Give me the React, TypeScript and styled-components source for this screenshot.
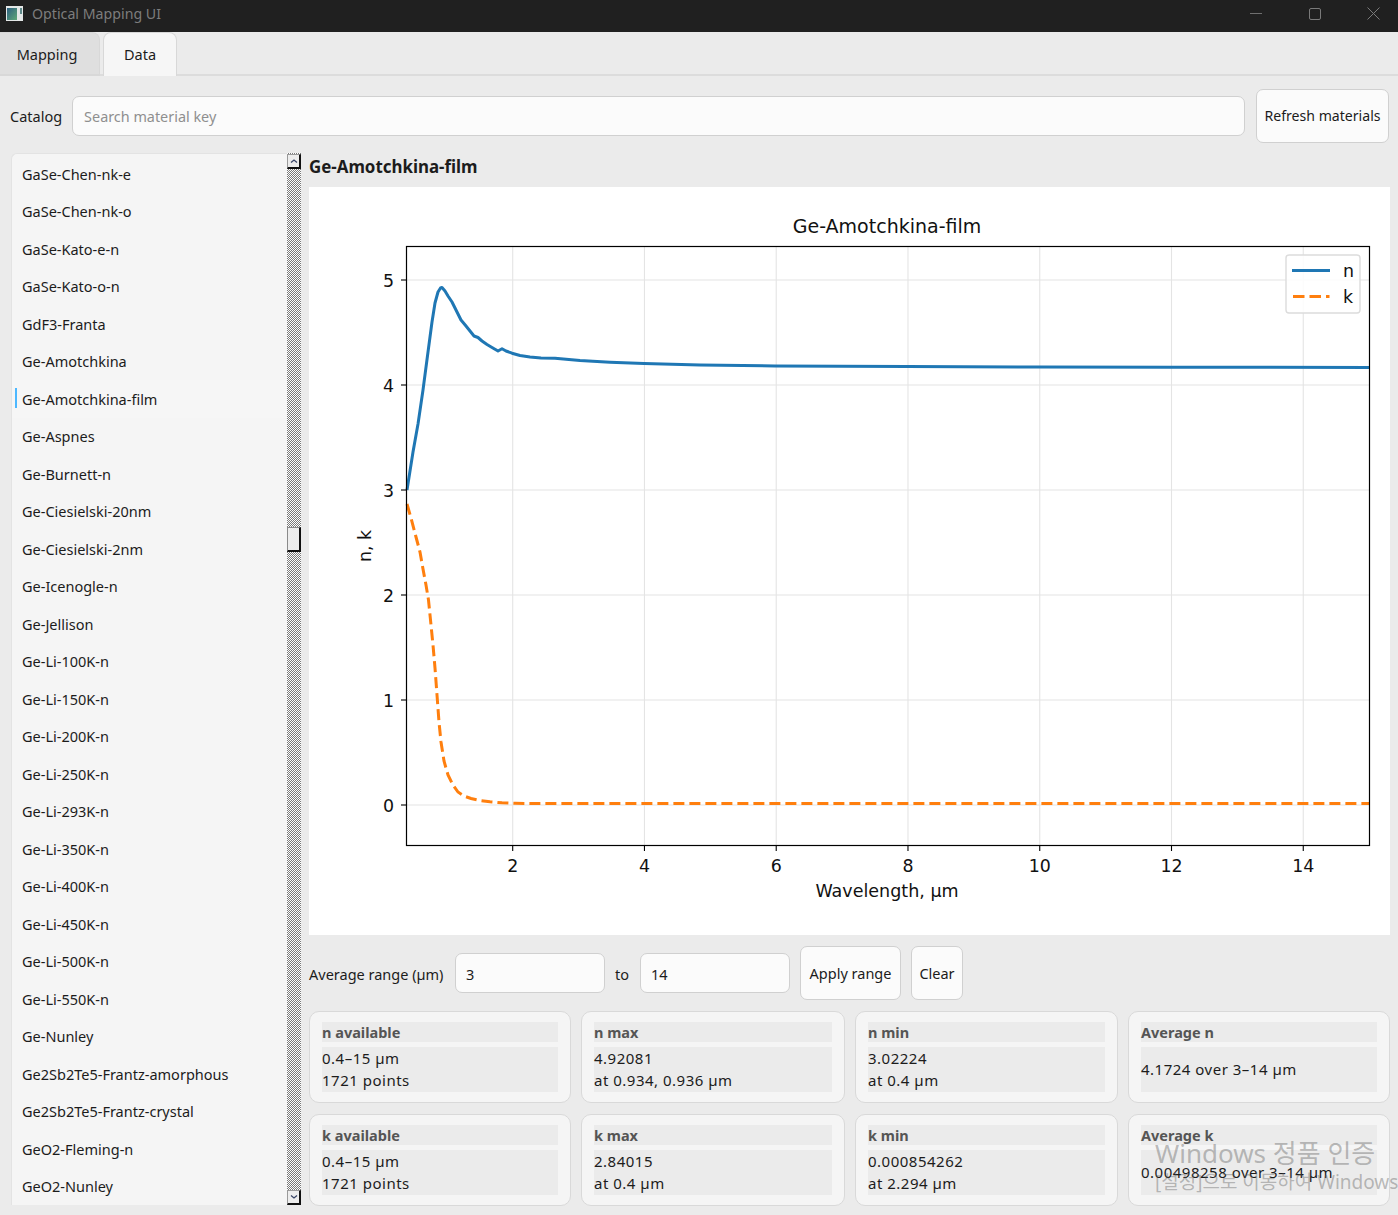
import React from "react";
import styled, { createGlobalStyle } from "styled-components";

const Global = createGlobalStyle`
  html, body { margin: 0; padding: 0; background: #ebebeb; }
  * { box-sizing: border-box; }
`;

const UI_FONT = `"Noto Sans", "Noto Sans CJK KR", sans-serif`;

const Page = styled.div`
  position: relative;
  width: 1398px;
  height: 1215px;
  overflow: hidden;
  background: #ebebeb;
  color: #1c1c1c;
  font-family: ${UI_FONT};
  font-size: 14.5px;
`;

const TitleBar = styled.div`
  height: 32px;
  background: #202020;
  display: flex;
  align-items: center;
  padding: 0 0 5px 6px;
  color: #7d7d7d;
  font-size: 14.2px;
`;
const TitleText = styled.span`
  margin-left: 9px;
  flex: 1;
`;
const WinButton = styled.div`
  width: 50px;
  margin-left: 8.5px;
  height: 27px;
  display: flex;
  align-items: center;
  justify-content: center;
`;

const TabBar = styled.div`
  height: 44px;
  display: flex;
  gap: 3px;
  align-items: flex-end;
  border-bottom: 2px solid #dcdcdc;
`;
const Tab = styled.div<{ $active?: boolean }>`
  width: ${(p) => (p.$active ? 74 : 100)}px;
  height: 44px;
  margin-bottom: -2px;
  padding: 0 ${(p) => (p.$active ? 0 : 5)}px ${(p) => (p.$active ? 2 : 0)}px 0;
  display: flex;
  align-items: center;
  justify-content: center;
  border: 1px solid #d8d8d8;
  border-bottom-width: ${(p) => (p.$active ? 0 : 2)}px;
  border-left-width: ${(p) => (p.$active ? 1 : 0)}px;
  border-radius: 0 8px 0 0;
  border-top-left-radius: ${(p) => (p.$active ? 8 : 0)}px;
  background: ${(p) => (p.$active ? "#f6f6f6" : "#dfdfdf")};
`;

const CatalogRow = styled.div`
  height: 53px;
  margin-top: 13px;
  padding: 0 9px 0 10px;
  display: flex;
  align-items: center;
`;
const Label = styled.span`
  white-space: nowrap;
`;
const TextInput = styled.div<{ $width?: number; $gap?: number }>`
  height: 40px;
  flex: ${(p) => (p.$width ? `0 0 ${p.$width}px` : 1)};
  margin-left: ${(p) => p.$gap ?? 0}px;
  background: #fbfbfb;
  border: 1px solid #d0d0d0;
  border-radius: 7px;
  display: flex;
  align-items: center;
  padding: 1px 0 0 10px;
`;
const SearchInput = styled(TextInput)`
  margin: 0 11px 0 10px;
  color: #8f8f8f;
  font-size: 14.4px;
  padding-left: 11px;
`;
const Button = styled.div<{ $width: number; $gap?: number; $size?: number }>`
  flex: 0 0 ${(p) => p.$width}px;
  margin-left: ${(p) => p.$gap ?? 0}px;
  height: 54px;
  background: #fbfbfb;
  border: 1px solid #d0d0d0;
  border-radius: 7px;
  display: flex;
  align-items: center;
  justify-content: center;
  white-space: nowrap;
  font-size: ${(p) => p.$size ?? 14.5}px;
`;

const Body = styled.div`
  margin-top: 11px;
  padding: 0 8px 0 11px;
  display: flex;
`;

const ListFrame = styled.div`
  width: 290px;
  height: 1052px;
  display: flex;
  flex: none;
`;
const List = styled.div`
  width: 276px;
  background: #f5f5f5;
  border: 1px solid #e3e3e3;
  border-right: none;
  border-bottom: none;
  border-radius: 6px 0 0 0;
  padding-top: 1px;
  overflow: hidden;
`;
const Row = styled.div<{ $selected?: boolean }>`
  position: relative;
  height: 37.5px;
  padding-left: 10px;
  display: flex;
  align-items: center;
  white-space: nowrap;
  font-size: 14.5px;
  background: ${(p) => (p.$selected ? "#f6f6f6" : "transparent")};
  ${(p) =>
    p.$selected
      ? `&::before { content: ""; position: absolute; left: 3px; top: 8px; width: 2px; height: 20px; background: #4db8ff; }`
      : ""}
`;
const ScrollBar = styled.div`
  position: relative;
  width: 14px;
  background-color: #fff;
  background-image: conic-gradient(#7a7a7a 25%, #fff 0 50%, #7a7a7a 0 75%, #fff 0);
  background-size: 2px 2px;
`;
const ScrollArrow = styled.div<{ $down?: boolean }>`
  position: absolute;
  left: 0;
  ${(p) => (p.$down ? "bottom: 0;" : "top: 1px;")}
  width: 14px;
  height: 15px;
  background: #ededed;
  border: 1px solid #9a9a9a;
  border-right: 2px solid #111;
  border-bottom: 2px solid #111;
  display: flex;
  align-items: center;
  justify-content: center;
`;
const ScrollThumb = styled.div`
  position: absolute;
  left: 0;
  top: 374px;
  width: 14px;
  height: 25px;
  background: #ededed;
  border: 1px solid #8a8a8a;
  border-right: 2px solid #111;
  border-bottom: 2px solid #111;
`;

const Detail = styled.div`
  flex: 1;
  min-width: 0;
  margin-left: 8px;
`;
const Heading = styled.div`
  height: 34px;
  padding-bottom: 7px;
  display: flex;
  align-items: center;
  font-weight: 700;
  font-size: 16.9px;
`;
const ChartCard = styled.div`
  height: 748px;
  background: #fff;
`;
const ChartSvg = styled.svg`
  display: block;
`;
const RangeRow = styled.div`
  margin-top: 11px;
  display: flex;
  align-items: center;
  height: 54px;
`;
const RangeLabel = styled(Label)`
  padding-top: 2px;
  width: 135px;
`;
const RangeTo = styled.span`
  margin: 0 11px 0 10px;
  padding-top: 2px;
`;
const Cards = styled.div`
  margin-top: 11px;
  display: grid;
  grid-template-columns: 262px 264px 263px 1fr;
  gap: 11px 10px;
`;
const Card = styled.div`
  height: 92px;
  background: #f5f5f5;
  border: 1px solid #d9d9d9;
  border-radius: 10px;
  padding: 10px 12px;
  display: flex;
  flex-direction: column;
  gap: 5px;
`;
const CardLabel = styled.div`
  height: 20px;
  flex: none;
  background: #ebebeb;
  color: #555;
  font-weight: 700;
  display: flex;
  align-items: center;
`;
const CardValue = styled.div`
  height: 45px;
  flex: none;
  background: #ebebeb;
  line-height: 22px;
  font-size: 15px;
  letter-spacing: 0.5px;
  padding-bottom: 2px;
  display: flex;
  flex-direction: column;
  justify-content: center;
`;
const Watermark = styled.div`
  position: absolute;
  left: 1155px;
  top: 1136px;
  color: rgba(90, 90, 90, 0.4);
  white-space: nowrap;
  pointer-events: none;
`;
const WatermarkTitle = styled.div`
  font-size: 26px;
  line-height: 34px;
`;
const WatermarkSub = styled.div`
  font-size: 19px;
  line-height: 24px;
`;

const materials = [
  "GaSe-Chen-nk-e", "GaSe-Chen-nk-o", "GaSe-Kato-e-n", "GaSe-Kato-o-n", "GdF3-Franta",
  "Ge-Amotchkina", "Ge-Amotchkina-film", "Ge-Aspnes", "Ge-Burnett-n", "Ge-Ciesielski-20nm",
  "Ge-Ciesielski-2nm", "Ge-Icenogle-n", "Ge-Jellison", "Ge-Li-100K-n", "Ge-Li-150K-n",
  "Ge-Li-200K-n", "Ge-Li-250K-n", "Ge-Li-293K-n", "Ge-Li-350K-n", "Ge-Li-400K-n",
  "Ge-Li-450K-n", "Ge-Li-500K-n", "Ge-Li-550K-n", "Ge-Nunley", "Ge2Sb2Te5-Frantz-amorphous",
  "Ge2Sb2Te5-Frantz-crystal", "GeO2-Fleming-n", "GeO2-Nunley",
];

const cards: { label: string; lines: string[] }[] = [
  { label: "n available", lines: ["0.4–15 µm", "1721 points"] },
  { label: "n max", lines: ["4.92081", "at 0.934, 0.936 µm"] },
  { label: "n min", lines: ["3.02224", "at 0.4 µm"] },
  { label: "Average n", lines: ["4.1724 over 3–14 µm"] },
  { label: "k available", lines: ["0.4–15 µm", "1721 points"] },
  { label: "k max", lines: ["2.84015", "at 0.4 µm"] },
  { label: "k min", lines: ["0.000854262", "at 2.294 µm"] },
  { label: "Average k", lines: ["0.00498258 over 3–14 µm"] },
];

const xTicks = [2, 4, 6, 8, 10, 12, 14];
const yTicks = [0, 1, 2, 3, 4, 5];
const xOf = (v: number) => 512.7 + (v - 2) * 65.88;
const yOf = (v: number) => 805 - v * 105;

const nPath =
  "M407 490 L413 452 L418 424 L423 390 L428 352 L432 322 L435 303 L438 292 L440.5 288 L442 287.5 L445 291 L448 296 L452 302 L456 310 L461 320 L466 326 L470 331 L474 336 L478 337.5 L482 341 L487 344.5 L492 347.5 L498 351 L502 348.8 L506 351 L512 353.2 L520 355.5 L530 357 L541 358 L555 358.3 L580 360.5 L610 362.3 L644 363.6 L700 365 L775 366 L907 366.6 L1039 367 L1171 367.2 L1369 367.4";
const kPath =
  "M407 504 L411 518 L416 537 L420 552 L423 569 L426 585 L428.5 600 L431 625 L433 645 L435 668 L437 695 L439 722 L441 742 L444 761 L448 775 L453 785 L458 792 L464 796 L471 798.5 L480 800.5 L490 801.8 L502 802.8 L515 803.3 L530 803.6 L560 803.5 L1369 803.5";

function Chart() {
  return (
    <ChartSvg width={1081} height={748} viewBox="309 187 1081 748" fontFamily='"DejaVu Sans", sans-serif' fill="#111">
      {xTicks.map((t) => (
        <line key={t} x1={xOf(t)} x2={xOf(t)} y1={247} y2={845} stroke="#e4e4e4" strokeWidth={1.1} />
      ))}
      {yTicks.map((t) => (
        <line key={t} x1={407} x2={1369} y1={yOf(t)} y2={yOf(t)} stroke="#e4e4e4" strokeWidth={1.1} />
      ))}
      <path d={nPath} fill="none" stroke="#1f77b4" strokeWidth={3} strokeLinejoin="round" />
      <path d={kPath} fill="none" stroke="#ff7f0e" strokeWidth={3} strokeDasharray="11 5" />
      <rect x={406.5} y={246.5} width={963} height={599} fill="none" stroke="#000" strokeWidth={1.2} />
      {xTicks.map((t) => (
        <g key={t}>
          <line x1={xOf(t)} x2={xOf(t)} y1={846} y2={851} stroke="#000" strokeWidth={1.1} />
          <text x={xOf(t)} y={872} fontSize={17.4} textAnchor="middle">{t}</text>
        </g>
      ))}
      {yTicks.map((t) => (
        <g key={t}>
          <line x1={401} x2={406} y1={yOf(t)} y2={yOf(t)} stroke="#000" strokeWidth={1.1} />
          <text x={394} y={yOf(t) + 6.5} fontSize={17.4} textAnchor="end">{t}</text>
        </g>
      ))}
      <text x={887} y={233} fontSize={19} textAnchor="middle">Ge-Amotchkina-film</text>
      <text x={887} y={897} fontSize={17.5} textAnchor="middle">Wavelength, µm</text>
      <text transform="translate(371 546) rotate(-90)" fontSize={17.4} textAnchor="middle">n, k</text>
      <rect x={1286} y={255} width={74} height={58} rx={3} fill="#fff" fillOpacity={0.85} stroke="#dcdcdc" strokeWidth={1.4} />
      <line x1={1292} x2={1330} y1={270.5} y2={270.5} stroke="#1f77b4" strokeWidth={3} />
      <line x1={1293} x2={1329.5} y1={296.5} y2={296.5} stroke="#ff7f0e" strokeWidth={3} strokeDasharray="11.5 5" />
      <text x={1343} y={277} fontSize={17.4}>n</text>
      <text x={1343} y={303} fontSize={17.4}>k</text>
    </ChartSvg>
  );
}

export default function App() {
  return (
    <Page>
      <Global />
      <TitleBar>
        <svg width="17" height="15" viewBox="0 0 17 15">
          <defs>
            <linearGradient id="appIcon" x1="0" y1="0" x2="1" y2="1">
              <stop offset="0" stopColor="#2d5f80" />
              <stop offset="1" stopColor="#5fa878" />
            </linearGradient>
          </defs>
          <rect width="17" height="15" fill="#e4e8e8" />
          <rect x="1" y="2" width="10" height="12" fill="url(#appIcon)" />
          <rect x="14" y="2" width="2" height="6" fill="#5f8a8a" />
        </svg>
        <TitleText>Optical Mapping UI</TitleText>
        <WinButton>
          <svg width="12" height="2"><rect width="12" height="1" fill="#6f6f6f" /></svg>
        </WinButton>
        <WinButton>
          <svg width="12" height="12"><rect x=".5" y=".5" width="11" height="11" rx="1.5" fill="none" stroke="#7a7a7a" /></svg>
        </WinButton>
        <WinButton>
          <svg width="13" height="13"><path d="M.5 .5 L12.5 12.5 M12.5 .5 L.5 12.5" stroke="#7a7a7a" /></svg>
        </WinButton>
      </TitleBar>
      <TabBar>
        <Tab>Mapping</Tab>
        <Tab $active>Data</Tab>
      </TabBar>
      <CatalogRow>
        <Label>Catalog</Label>
        <SearchInput>Search material key</SearchInput>
        <Button $width={133} $size={14.1}>Refresh materials</Button>
      </CatalogRow>
      <Body>
        <ListFrame>
          <List>
            {materials.map((m) => (
              <Row key={m} $selected={m === "Ge-Amotchkina-film"}>{m}</Row>
            ))}
          </List>
          <ScrollBar>
            <ScrollArrow>
              <svg width="8" height="6"><path d="M1 4.5 L4 2 L7 4.5" fill="none" stroke="#3a4668" strokeWidth="1.3" /></svg>
            </ScrollArrow>
            <ScrollThumb />
            <ScrollArrow $down>
              <svg width="8" height="6"><path d="M1 1.5 L4 4 L7 1.5" fill="none" stroke="#3a4668" strokeWidth="1.3" /></svg>
            </ScrollArrow>
          </ScrollBar>
        </ListFrame>
        <Detail>
          <Heading>Ge-Amotchkina-film</Heading>
          <ChartCard>
            <Chart />
          </ChartCard>
          <RangeRow>
            <RangeLabel>Average range (µm)</RangeLabel>
            <TextInput $width={150} $gap={11}>3</TextInput>
            <RangeTo>to</RangeTo>
            <TextInput $width={150}>14</TextInput>
            <Button $width={101} $gap={10}>Apply range</Button>
            <Button $width={52} $gap={10}>Clear</Button>
          </RangeRow>
          <Cards>
            {cards.map((c) => (
              <Card key={c.label}>
                <CardLabel>{c.label}</CardLabel>
                <CardValue>
                  {c.lines.map((l) => (
                    <div key={l}>{l}</div>
                  ))}
                </CardValue>
              </Card>
            ))}
          </Cards>
        </Detail>
      </Body>
      <Watermark>
        <WatermarkTitle>Windows 정품 인증</WatermarkTitle>
        <WatermarkSub>[설정]으로 이동하여 Windows를 정품 인증합니다.</WatermarkSub>
      </Watermark>
    </Page>
  );
}
